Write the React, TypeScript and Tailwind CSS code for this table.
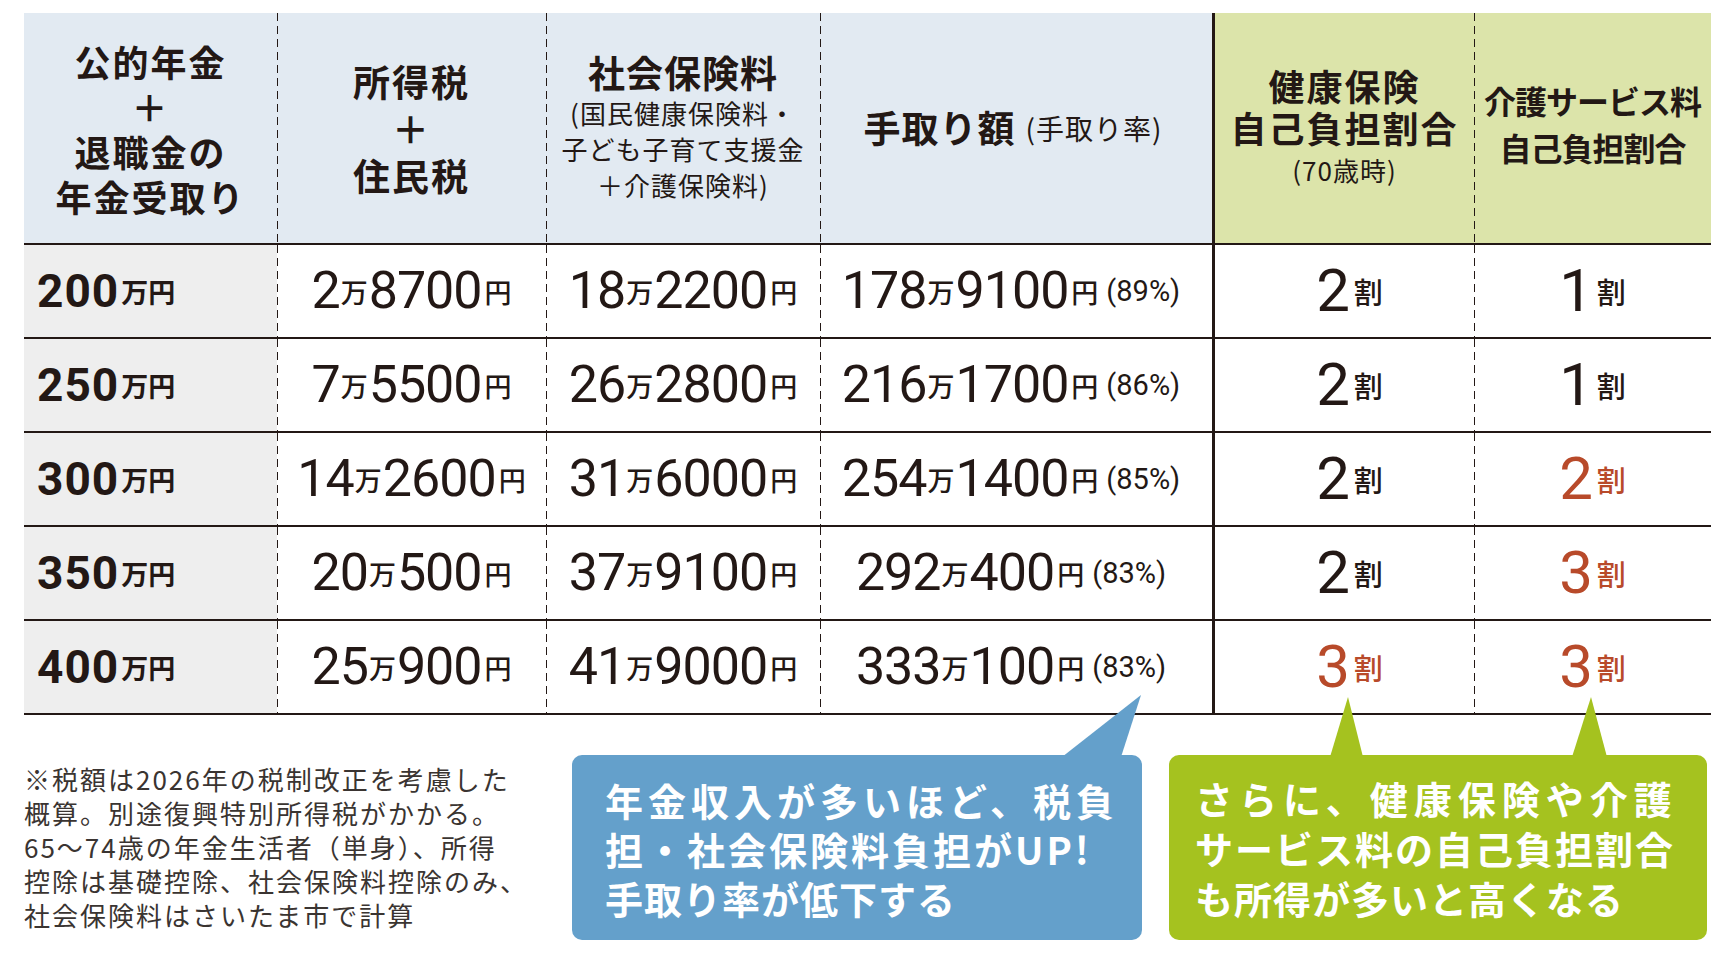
const JP = "font-['Noto_Sans_CJK_JP',sans-serif]";
const NUM = "font-['Roboto','Noto_Sans_CJK_JP',sans-serif]";
const DASH =
  "bg-[image:repeating-linear-gradient(to_bottom,#231815_0_8px,transparent_8px_13px)] bg-no-repeat bg-[length:1px_100%]";

type Row = {
  income: string;
  tax: string;
  social: string;
  net: string;
  rate: string;
  health: [string, boolean];
  care: [string, boolean];
};

const ROWS: Row[] = [
  { income: "200", tax: "2万8700円", social: "18万2200円", net: "178万9100円", rate: "(89%)", health: ["2", false], care: ["1", false] },
  { income: "250", tax: "7万5500円", social: "26万2800円", net: "216万1700円", rate: "(86%)", health: ["2", false], care: ["1", false] },
  { income: "300", tax: "14万2600円", social: "31万6000円", net: "254万1400円", rate: "(85%)", health: ["2", false], care: ["2", true] },
  { income: "350", tax: "20万500円", social: "37万9100円", net: "292万400円", rate: "(83%)", health: ["2", false], care: ["3", true] },
  { income: "400", tax: "25万900円", social: "41万9000円", net: "333万100円", rate: "(83%)", health: ["3", true], care: ["3", true] },
];

function Money({ v }: { v: string }) {
  const parts = v.match(/\d+|[^\d]+/g) ?? [];
  return (
    <div className="flex items-center text-[#231815]">
      {parts.map((p, i) =>
        /\d/.test(p) ? (
          <span key={i} className={`${NUM} text-[52px] leading-none font-normal tracking-[-1px]`}>
            {p}
          </span>
        ) : (
          <span key={i} className={`${JP} text-[27px] leading-none font-medium ${p === "万" ? "mx-[1px]" : "ml-[3px]"}`}>
            {p}
          </span>
        )
      )}
    </div>
  );
}

function Ratio({ n, red }: { n: string; red: boolean }) {
  return (
    <div className={`flex items-center ${red ? "text-[#b84a2a]" : "text-[#231815]"}`}>
      <span className={`${NUM} text-[60px] leading-none font-normal tracking-[-3px]`}>{n}</span>
      <span className={`${JP} text-[29px] leading-none font-medium ml-[7px]`}>割</span>
    </div>
  );
}

export default function App() {
  return (
    <div className="w-[1736px] h-[958px] bg-white pl-[24px] pt-[13px] text-[#231815] overflow-hidden">
      {/* table */}
      <div className="w-[1687px]">
        {/* header */}
        <div className={`flex h-[232px] border-b-2 border-[#231815] ${JP} font-bold`}>
          <div className="w-[253px] bg-[#e2eaf2] flex flex-col items-center justify-center text-[36px] leading-[45px] tracking-[2px] pt-[2px]">
            <div>公的年金</div>
            <div>＋</div>
            <div>退職金の</div>
            <div>年金受取り</div>
          </div>
          <div className={`w-[269px] bg-[#e2eaf2] ${DASH} flex flex-col items-center justify-center text-[37px] leading-[47px] tracking-[2px]`}>
            <div>所得税</div>
            <div>＋</div>
            <div>住民税</div>
          </div>
          <div className={`w-[274px] bg-[#e2eaf2] ${DASH} flex flex-col items-center justify-center pb-[4px]`}>
            <div className="text-[37px] leading-[46px] tracking-[1px]">社会保険料</div>
            <div className="text-[26px] leading-[36px] font-normal tracking-[1px] text-center">
              <div>(国民健康保険料・</div>
              <div>子ども子育て支援金</div>
              <div>＋介護保険料)</div>
            </div>
          </div>
          <div className={`w-[392px] bg-[#e2eaf2] ${DASH} flex items-center justify-center pr-[6px]`}>
            <span className="text-[37px] tracking-[1px]">手取り額</span>
            <span className="text-[28px] font-normal ml-[10px] tracking-[1px]">(手取り率)</span>
          </div>
          <div className="w-[262px] bg-[#dce4aa] border-l-[3px] border-[#231815] flex flex-col items-center justify-center">
            <div className="text-[36px] leading-[42px] tracking-[2px]">健康保険</div>
            <div className="text-[36px] leading-[42px] tracking-[2px]">自己負担割合</div>
            <div className="text-[26px] leading-[44px] font-normal tracking-[1px]">(70歳時)</div>
          </div>
          <div className={`w-[237px] bg-[#dce4aa] ${DASH} flex flex-col items-center justify-center text-[32px] leading-[47px] tracking-[-1px] pb-[8px]`}>
            <div>介護サービス料</div>
            <div>自己負担割合</div>
          </div>
        </div>

        {/* body */}
        {ROWS.map((r) => (
          <div key={r.income} className="flex h-[94px] border-b-2 border-[#231815]">
            <div className="w-[253px] bg-[#eeeeee] flex items-center pl-[13px]">
              <span className={`${NUM} text-[46px] leading-none font-bold tracking-[1px]`}>{r.income}</span>
              <span className={`${JP} text-[27px] leading-none font-bold ml-[2px]`}>万円</span>
            </div>
            <div className={`w-[269px] ${DASH} flex items-center justify-center`}>
              <Money v={r.tax} />
            </div>
            <div className={`w-[274px] ${DASH} flex items-center justify-center`}>
              <Money v={r.social} />
            </div>
            <div className={`w-[392px] ${DASH} flex items-center justify-center pr-[10px]`}>
              <Money v={r.net} />
              <span className={`${NUM} text-[29px] leading-none ml-[8px]`}>{r.rate}</span>
            </div>
            <div className="w-[262px] border-l-[3px] border-[#231815] flex items-center justify-center pl-[10px]">
              <Ratio n={r.health[0]} red={r.health[1]} />
            </div>
            <div className={`w-[237px] ${DASH} flex items-center justify-center`}>
              <Ratio n={r.care[0]} red={r.care[1]} />
            </div>
          </div>
        ))}
      </div>

      {/* notes + callouts */}
      <div className="flex mt-[40px]">
        <div className={`w-[548px] pt-[7px] ${JP} text-[26px] leading-[34px] tracking-[2px] text-[#3a3431]`}>
          <div>※税額は2026年の税制改正を考慮した</div>
          <div>概算。別途復興特別所得税がかかる。</div>
          <div>65～74歳の年金生活者（単身）、所得</div>
          <div>控除は基礎控除、社会保険料控除のみ、</div>
          <div>社会保険料はさいたま市で計算</div>
        </div>

        <div className={`relative w-[570px] h-[185px] rounded-[10px] bg-[#64a0cb] pl-[33px] pt-[20px] ${JP} font-bold text-white text-[38px] leading-[49px]`}>
          <svg className="absolute left-[490px] top-[-60px]" width="80" height="62" viewBox="0 0 80 62">
            <polygon points="0,62 59,62 79,0" fill="#64a0cb" />
          </svg>
          <div className="relative tracking-[5px]">年金収入が多いほど、税負</div>
          <div className="relative tracking-[3px]">担・社会保険料負担がUP!</div>
          <div className="relative tracking-[1px]">手取り率が低下する</div>
        </div>

        <div className={`relative ml-[27px] w-[538px] h-[185px] rounded-[10px] bg-[#a5c21f] pl-[26px] pt-[18px] ${JP} font-bold text-white text-[38px] leading-[50px]`}>
          <svg className="absolute left-[158px] top-[-58px]" width="40" height="60" viewBox="0 0 40 60">
            <polygon points="3,60 36,60 21,0" fill="#a5c21f" />
          </svg>
          <svg className="absolute left-[400px] top-[-58px]" width="42" height="60" viewBox="0 0 42 60">
            <polygon points="3,60 38,60 22,0" fill="#a5c21f" />
          </svg>
          <div className="relative tracking-[6px]">さらに、健康保険や介護</div>
          <div className="relative tracking-[2px]">サービス料の自己負担割合</div>
          <div className="relative tracking-[1px]">も所得が多いと高くなる</div>
        </div>
      </div>
    </div>
  );
}
